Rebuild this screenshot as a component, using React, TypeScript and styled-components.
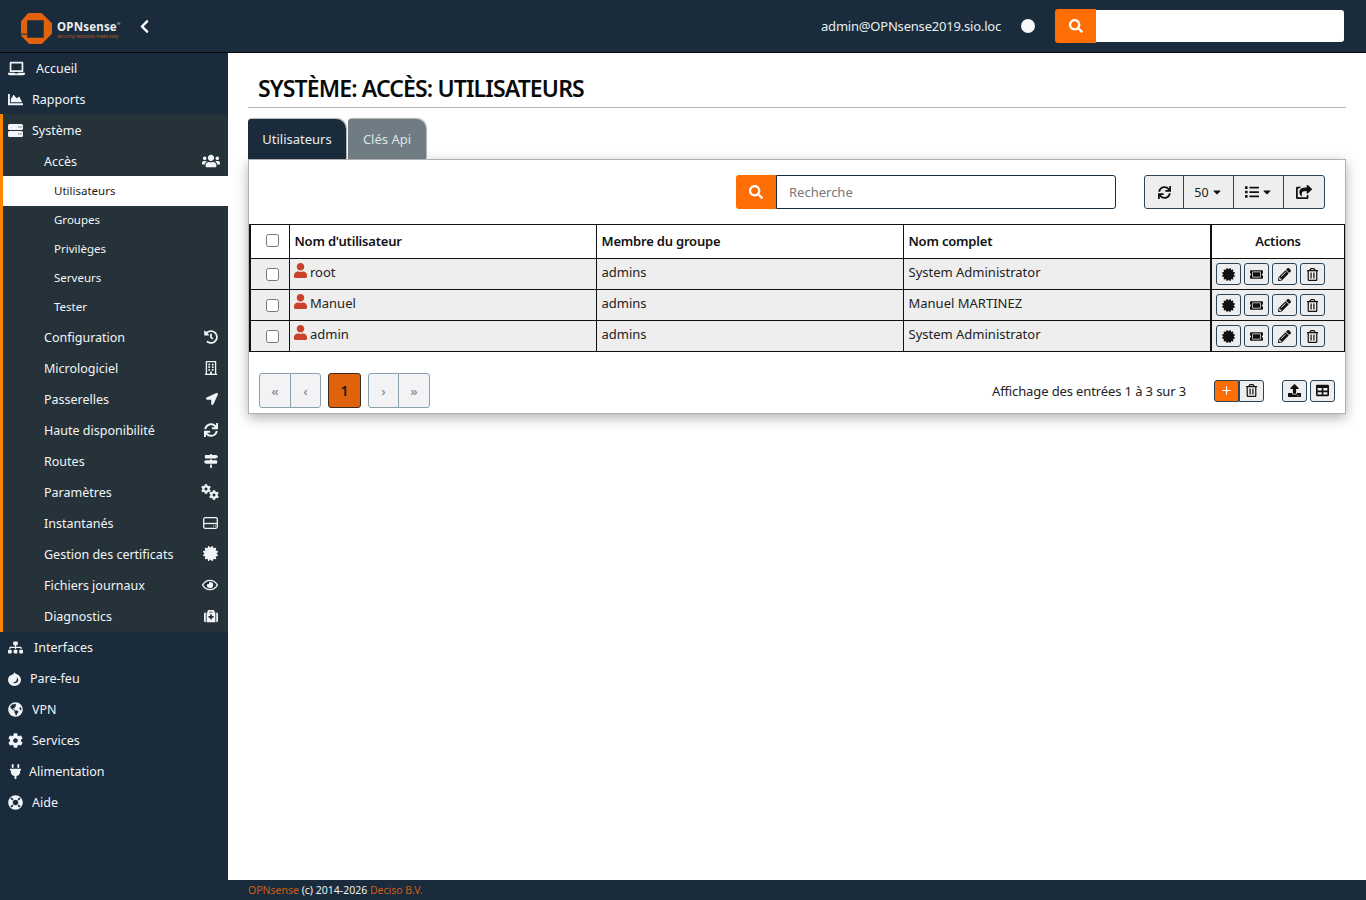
import React from "react";
import styled, { createGlobalStyle } from "styled-components";
import { Plus } from "lucide-react";
import {
  FaLaptop, FaChartArea, FaUsers, FaHistory, FaRegBuilding, FaLocationArrow, FaSync,
  FaMapSigns, FaCertificate, FaRegEye, FaMedkit, FaSitemap, FaGlobeAmericas,
  FaCog, FaPlug, FaLifeRing, FaSearch, FaUser, FaList, FaShareSquare, FaTicketAlt, FaPencilAlt,
  FaRegTrashAlt, FaUpload, FaTable, FaChevronLeft, FaCaretDown,
} from "react-icons/fa";

const GlobalStyle = createGlobalStyle`
  html, body {
    margin: 0;
    height: 100%;
    overflow: hidden;
    background: #fff;
    font-family: "Noto Sans", "Liberation Sans", sans-serif;
    font-size: 13px;
    color: #222;
  }
  * { box-sizing: border-box; }
`;

const Page = styled.div`
  display: grid;
  grid-template-columns: 228px 1fr;
  grid-template-rows: 53px 827px 20px;
  height: 900px;
`;

const Header = styled.header`
  grid-column: 1 / 3;
  display: flex;
  align-items: center;
  background: #1a2b3b;
  border-bottom: 1px solid #0c0c0c;
  padding: 0 22px 0 21px;
  color: #e8eef2;
`;

const Brand = styled.div`
  display: flex;
  align-items: center;
  gap: 5px;
  margin-top: 4px;
`;

const BrandText = styled.div`
  display: flex;
  flex-direction: column;
  color: #eee;
  font-weight: 700;
  font-size: 11.5px;
  line-height: 12px;
  letter-spacing: 0.2px;
  margin-top: 3px;
  sup {
    font-size: 4px;
    font-weight: 400;
    line-height: 0;
    vertical-align: 6px;
  }
  small {
    color: #b4571c;
    font-size: 4.400px;
    font-weight: 400;
    line-height: 6px;
    letter-spacing: 0;
  }
`;

const Collapse = styled.span`
  display: flex;
  margin-left: 17px;
  color: #fff;
  font-size: 15px;
`;

const HeaderRight = styled.div`
  margin-left: auto;
  display: flex;
  align-items: center;
`;

const HostName = styled.span`
  font-size: 13px;
  letter-spacing: -0.2px;
`;

const StatusDot = styled.span`
  width: 14px;
  height: 14px;
  border-radius: 50%;
  background: #f8f8f8;
  margin: 0 20px 0 20px;
`;

const SearchButton = styled.button<{ $width: number }>`
  width: ${(p) => p.$width}px;
  height: 34px;
  border: 0;
  border-radius: 3px 0 0 3px;
  background: #ff6d05;
  color: #fff;
  font-size: 14px;
  display: flex;
  align-items: center;
  justify-content: center;
  padding: 0;
`;

const TopInput = styled.div`
  width: 248px;
  height: 32px;
  background: #fff;
  border-radius: 0 3px 3px 0;
`;

const Sidebar = styled.nav`
  grid-row: 2 / 4;
  background: #1a2b3b;
  color: #f2f5f7;
  font-size: 12.5px;
`;

const Item = styled.div<{ $gap: number }>`
  height: 31px;
  display: flex;
  align-items: center;
  gap: ${(p) => p.$gap}px;
  padding-left: 8px;
  svg { font-size: 15px; flex: none; }
`;

const Section = styled.div`
  margin-top: -1px;
  background: #263239;
  border-left: 3px solid #ff8500;
`;

const SectionHead = styled(Item)`
  padding: 2px 0 0 5px;
`;

const Sub = styled.div`
  height: 31px;
  display: flex;
  align-items: center;
  justify-content: space-between;
  padding: 0 10px 0 41px;
  svg { font-size: 14px; margin-top: -2px; }
`;

const AccessRow = styled(Sub)`
  padding: 2px 8px 0 41px;
`;

const Leaf = styled.div<{ $active?: boolean }>`
  height: 29px;
  display: flex;
  align-items: center;
  padding: 0 0 3px 51px;
  font-size: 11.5px;
  ${(p) => p.$active && "background: #fff; color: #1a1a1a; height: 30px; padding-bottom: 1px;"}
`;

const GearPair = styled.span`
  display: flex;
  margin-right: -1px;
  svg { font-size: 10px; }
  svg:first-child { margin-top: -4px; }
  svg:last-child { margin: 2px 0 -2px -2px; }
`;

const Main = styled.main`
  padding: 0 20px;
  min-width: 0;
`;

const Title = styled.h1`
  margin: 21px 0 0;
  height: 34px;
  padding-left: 10px;
  border-bottom: 1px solid #b5b5b5;
  font-size: 23px;
  line-height: 29px;
  font-weight: 600;
  letter-spacing: -0.87px;
  color: #0a0a0a;
`;

const Tabs = styled.div`
  display: flex;
  gap: 2px;
  margin-top: 11px;
`;

const Tab = styled.div<{ $active?: boolean; $width: number }>`
  width: ${(p) => p.$width}px;
  height: 40px;
  display: flex;
  align-items: center;
  justify-content: center;
  border-radius: 3px 10px 0 0;
  background: ${(p) => (p.$active ? "#1a2b3b" : "#6f7c84")};
  color: ${(p) => (p.$active ? "#e8eef2" : "#dfe4e7")};
  box-shadow: 1px -1px 1px rgba(0, 0, 0, 0.3);
  font-size: 13px;
`;

const Panel = styled.section`
  height: 255px;
  border: 1px solid #b0b0b0;
  box-shadow: 0 4px 12px rgba(0, 0, 0, 0.3);
  background: #fff;
`;

const Toolbar = styled.div`
  height: 64px;
  display: flex;
  align-items: flex-start;
  padding: 15px 20px 0 487px;
`;

const SearchField = styled.div`
  width: 340px;
  height: 34px;
  border: 1px solid #1a2b3b;
  border-radius: 0 3px 3px 0;
  padding-left: 12px;
  line-height: 33px;
  color: #777;
  font-size: 13px;
`;

const ToolGroup = styled.div`
  display: flex;
  margin-left: 28px;
  height: 34px;
  background: #eee;
  border: 1px solid #2a4458;
  border-radius: 3px;
`;

const ToolButton = styled.div<{ $width: number; $size: number }>`
  width: ${(p) => p.$width}px;
  display: flex;
  align-items: center;
  justify-content: center;
  gap: 2px;
  font-size: 12.5px;
  color: #222;
  svg { font-size: ${(p) => p.$size}px; color: #111; }
  & + & { border-left: 1px solid #2a4458; }
  svg.caret { font-size: 12px; }
`;

const Table = styled.table`
  border-collapse: collapse;
  table-layout: fixed;
  width: 1096px;
  background: #fff;
  border: 1px solid #111;
  border-left-width: 2px;
  th, td {
    border: 1px solid #111;
    padding: 0 5px;
    text-align: left;
    overflow: hidden;
    white-space: nowrap;
  }
  th {
    height: 34px;
    padding-bottom: 2px;
    font-weight: 600;
    font-size: 13px;
    letter-spacing: -0.2px;
    color: #111;
  }
  td {
    height: 31px;
    padding-bottom: 5px;
    background: #eee;
    font-size: 13px;
    color: #222;
  }
`;

const CheckHead = styled.th`
  text-align: center !important;
  padding: 0 0 5px 5px !important;
`;

const CheckCell = styled.td`
  text-align: center !important;
  padding: 0 0 2px 5px !important;
`;

const Check = styled.input.attrs({ type: "checkbox" })`
  width: 13px;
  height: 13px;
  margin: 0;
  vertical-align: middle;
`;

const ActionsHead = styled.th`
  text-align: center !important;
  border-left-width: 2px !important;
`;

const ActionsCell = styled.td`
  border-left-width: 2px !important;
  padding: 0 0 0 4px !important;
`;

const NameCell = styled.td`
  padding-bottom: 3px !important;
`;

const UserName = styled.span`
  display: inline-flex;
  align-items: center;
  gap: 2.500px;
  svg { color: #c8432a; font-size: 15px; margin: -1px 0 1px -2px; }
`;

const Actions = styled.div`
  display: flex;
  gap: 3px;
`;

const SmallButton = styled.div<{ $primary?: boolean; $joined?: "left" | "right" }>`
  width: 25px;
  height: 22px;
  display: flex;
  align-items: center;
  justify-content: center;
  border: 1px solid #2a4458;
  border-radius: ${(p) => (p.$joined === "left" ? "3px 0 0 3px" : p.$joined === "right" ? "0 3px 3px 0" : "3px")};
  background: ${(p) => (p.$primary ? "#ff6d05" : "#eee")};
  color: ${(p) => (p.$primary ? "#fff" : "#111")};
  font-size: 13px;
`;

const PagerRow = styled.div`
  display: flex;
  align-items: center;
  height: 61px;
  padding: 16px 10px 0 10px;
`;

const PageGroup = styled.div`
  display: flex;
  margin-right: 7px;
`;

const PageLink = styled.div<{ $width: number }>`
  width: ${(p) => p.$width}px;
  height: 35px;
  display: flex;
  align-items: center;
  justify-content: center;
  background: #f3f3f6;
  border: 1px solid #8ba0aa;
  color: #8898a2;
  font-size: 13px;
  font-weight: 600;
  & + & { margin-left: -1px; }
  &:first-child { border-radius: 3px 0 0 3px; }
  &:last-child { border-radius: 0 3px 3px 0; }
`;

const CurrentPage = styled.div`
  width: 33px;
  height: 35px;
  display: flex;
  align-items: center;
  justify-content: center;
  background: #e0620d;
  border: 1px solid #3a2a20;
  border-radius: 3px;
  color: #1a1a1a;
  font-size: 14px;
  font-weight: 600;
`;

const PagerInfo = styled.span`
  margin-left: auto;
  margin-right: 28px;
  font-size: 13px;
  letter-spacing: -0.12px;
  color: #222;
`;

const PagerButtons = styled.div`
  display: flex;
  margin-right: 18px;
`;

const PagerTools = styled.div`
  display: flex;
  gap: 3px;
`;

const Footer = styled.footer`
  background: #1a2b3b;
  color: #f0f0f0;
  padding-left: 20px;
  font-size: 10.5px;
  line-height: 20px;
  span { color: #cf5c14; }
`;

function ServerIcon() {
  return (
    <svg width="15" height="13" viewBox="0 0 15 13" fill="currentColor">
      <path d="M1.500 0H13.500A1.500 1.500 0 0 1 15 1.500V4.500A1.500 1.500 0 0 1 13.500 6H1.500A1.500 1.500 0 0 1 0 4.500V1.500A1.500 1.500 0 0 1 1.500 0Z" />
      <path d="M1.500 7H13.500A1.500 1.500 0 0 1 15 8.500V11.500A1.500 1.500 0 0 1 13.500 13H1.500A1.500 1.500 0 0 1 0 11.500V8.500A1.500 1.500 0 0 1 1.500 7Z" />
      <path fill="#263239" d="M10.500 2.500h1v1h-1zM12.500 2.500h1v1h-1zM10.500 9.500h1v1h-1zM12.500 9.500h1v1h-1z" />
    </svg>
  );
}

function DriveIcon() {
  return (
    <svg width="15" height="12" viewBox="0 0 15 12" fill="none" stroke="currentColor" strokeWidth="1.300">
      <rect x="0.700" y="0.700" width="13.600" height="10.600" rx="1.500" />
      <path d="M0.700 6.500H14.300" />
      <path d="M10 9H11M12 9H13" strokeWidth="1" />
    </svg>
  );
}

function FlameIcon() {
  return (
    <svg width="13" height="14" viewBox="0 0 13 14">
      <path fill="currentColor" d="M6.500 0C7 1.500 8 2 9.500 2.500C11.500 3.500 13 5.500 13 8A6.500 6 0 0 1 0 8C0 5 2 3.500 3.500 3C5 2.500 6.200 1.500 6.500 0Z" />
      <path fill="#1a2b3b" d="M8.800 5.500C9.300 8 8 10.500 4.500 10.500C6 11.800 9.800 11.500 10.200 8.500C10.400 7.300 9.800 6 8.800 5.500Z" />
    </svg>
  );
}

function Logo() {
  return (
    <svg width="31" height="31" viewBox="0 0 30 30">
      <path
        fillRule="evenodd"
        fill="#e0620d"
        d="M7 0H20L30 10V20L20 30H8L0 22V8ZM6 7V24H22V7Z"
      />
      <rect x="0" y="20" width="6" height="1" fill="#1a2b3b" />
    </svg>
  );
}

const menuTop = [
  { label: "Accueil", icon: <FaLaptop size={17} />, gap: 11 },
  { label: "Rapports", icon: <FaChartArea />, gap: 9 },
];

const subItems = [
  { label: "Configuration", icon: <FaHistory /> },
  { label: "Micrologiciel", icon: <FaRegBuilding /> },
  { label: "Passerelles", icon: <FaLocationArrow size={12} /> },
  { label: "Haute disponibilité", icon: <FaSync /> },
  { label: "Routes", icon: <FaMapSigns /> },
  { label: "Paramètres", icon: <GearPair><FaCog /><FaCog /></GearPair> },
  { label: "Instantanés", icon: <DriveIcon /> },
  { label: "Gestion des certificats", icon: <FaCertificate size={15} /> },
  { label: "Fichiers journaux", icon: <FaRegEye size={16} /> },
  { label: "Diagnostics", icon: <FaMedkit /> },
];

const menuBottom = [
  { label: "Interfaces", icon: <FaSitemap />, gap: 11 },
  { label: "Pare-feu", icon: <FlameIcon />, gap: 9 },
  { label: "VPN", icon: <FaGlobeAmericas />, gap: 9 },
  { label: "Services", icon: <FaCog />, gap: 9 },
  { label: "Alimentation", icon: <FaPlug />, gap: 6 },
  { label: "Aide", icon: <FaLifeRing />, gap: 9 },
];

const leaves = ["Utilisateurs", "Groupes", "Privilèges", "Serveurs", "Tester"];

const users = [
  { name: "root", group: "admins", full: "System Administrator" },
  { name: "Manuel", group: "admins", full: "Manuel MARTINEZ" },
  { name: "admin", group: "admins", full: "System Administrator" },
];

export default function App() {
  return (
    <Page>
      <GlobalStyle />
      <Header>
        <Brand>
          <Logo />
          <BrandText>
            <span>OPNsense<sup>®</sup></span>
            <small>securing networks made easy</small>
          </BrandText>
        </Brand>
        <Collapse>
          <FaChevronLeft />
        </Collapse>
        <HeaderRight>
          <HostName>admin@OPNsense2019.sio.loc</HostName>
          <StatusDot />
          <SearchButton $width={41}>
            <FaSearch />
          </SearchButton>
          <TopInput />
        </HeaderRight>
      </Header>
      <Sidebar>
        {menuTop.map((m) => (
          <Item key={m.label} $gap={m.gap}>
            {m.icon}
            {m.label}
          </Item>
        ))}
        <Section>
          <SectionHead $gap={9}>
            <ServerIcon />
            Système
          </SectionHead>
          <AccessRow>
            Accès
            <FaUsers size={18} />
          </AccessRow>
          {leaves.map((l, i) => (
            <Leaf key={l} $active={i === 0}>
              {l}
            </Leaf>
          ))}
          {subItems.map((s) => (
            <Sub key={s.label}>
              {s.label}
              {s.icon}
            </Sub>
          ))}
        </Section>
        {menuBottom.map((m) => (
          <Item key={m.label} $gap={m.gap}>
            {m.icon}
            {m.label}
          </Item>
        ))}
      </Sidebar>
      <Main>
        <Title>SYSTÈME: ACCÈS: UTILISATEURS</Title>
        <Tabs>
          <Tab $active $width={98}>Utilisateurs</Tab>
          <Tab $width={78}>Clés Api</Tab>
        </Tabs>
        <Panel>
          <Toolbar>
            <SearchButton $width={40}>
              <FaSearch />
            </SearchButton>
            <SearchField>Recherche</SearchField>
            <ToolGroup>
              <ToolButton $width={38} $size={13}>
                <FaSync />
              </ToolButton>
              <ToolButton $width={50} $size={14}>
                50
                <FaCaretDown className="caret" />
              </ToolButton>
              <ToolButton $width={50} $size={14}>
                <FaList />
                <FaCaretDown className="caret" />
              </ToolButton>
              <ToolButton $width={41} $size={16}>
                <FaShareSquare />
              </ToolButton>
            </ToolGroup>
          </Toolbar>
          <Table>
            <colgroup>
              <col width={39} />
              <col width={307} />
              <col width={307} />
              <col width={308} />
              <col />
            </colgroup>
            <thead>
              <tr>
                <CheckHead>
                  <Check />
                </CheckHead>
                <th>Nom d'utilisateur</th>
                <th>Membre du groupe</th>
                <th>Nom complet</th>
                <ActionsHead>Actions</ActionsHead>
              </tr>
            </thead>
            <tbody>
              {users.map((u) => (
                <tr key={u.name}>
                  <CheckCell>
                    <Check />
                  </CheckCell>
                  <NameCell>
                    <UserName>
                      <FaUser />
                      {u.name}
                    </UserName>
                  </NameCell>
                  <td>{u.group}</td>
                  <td>{u.full}</td>
                  <ActionsCell>
                    <Actions>
                      <SmallButton><FaCertificate /></SmallButton>
                      <SmallButton><FaTicketAlt /></SmallButton>
                      <SmallButton><FaPencilAlt /></SmallButton>
                      <SmallButton><FaRegTrashAlt /></SmallButton>
                    </Actions>
                  </ActionsCell>
                </tr>
              ))}
            </tbody>
          </Table>
          <PagerRow>
            <PageGroup>
              <PageLink $width={32}>«</PageLink>
              <PageLink $width={31}>‹</PageLink>
            </PageGroup>
            <PageGroup>
              <CurrentPage>1</CurrentPage>
            </PageGroup>
            <PageGroup>
              <PageLink $width={31}>›</PageLink>
              <PageLink $width={32}>»</PageLink>
            </PageGroup>
            <PagerInfo>Affichage des entrées 1 à 3 sur 3</PagerInfo>
            <PagerButtons>
              <SmallButton $primary $joined="left"><Plus size={13} strokeWidth={2.2} /></SmallButton>
              <SmallButton $joined="right"><FaRegTrashAlt /></SmallButton>
            </PagerButtons>
            <PagerTools>
              <SmallButton><FaUpload /></SmallButton>
              <SmallButton><FaTable /></SmallButton>
            </PagerTools>
          </PagerRow>
        </Panel>
      </Main>
      <Footer>
        <span>OPNsense</span> (c) 2014-2026 <span>Deciso B.V.</span>
      </Footer>
    </Page>
  );
}
